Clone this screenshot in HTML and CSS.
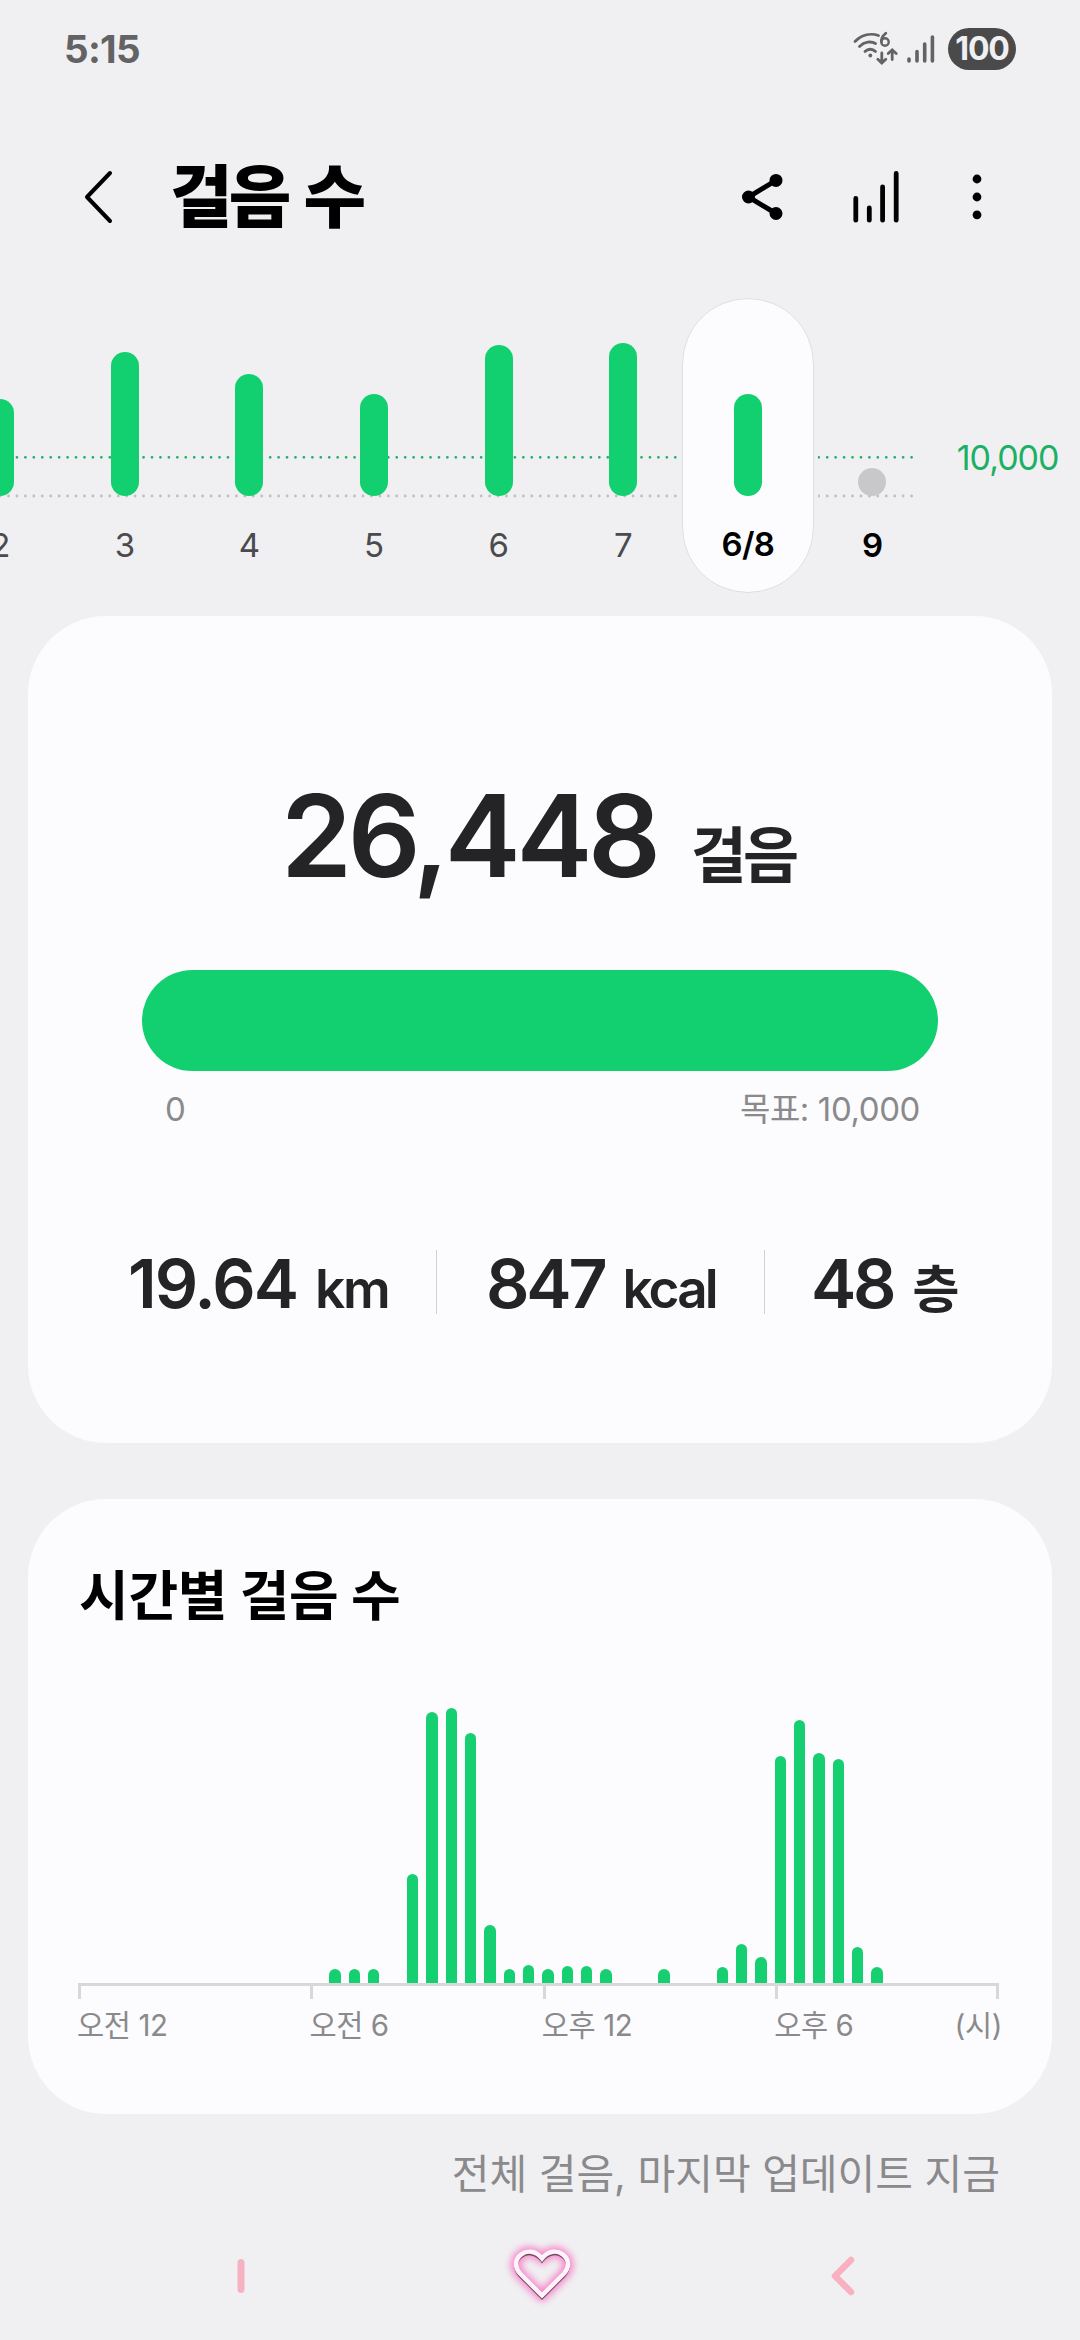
FILE: index.html
```html
<!DOCTYPE html>
<html lang="ko">
<head>
<meta charset="utf-8">
<title>걸음 수</title>
<link rel="stylesheet" href="styles.css">
</head>
<body>
<div class="status">
  <span class="clock">5:15</span>
  <div class="status-icons">
    <svg class="wifi" width="46" height="36" viewBox="0 0 46 36" fill="none" stroke="#636365" stroke-width="2.8" stroke-linecap="round">
      <path d="M2 10.500C9 3.500 18 2 25.500 4.500M6.500 15.500C11.500 10.500 18 10 22.500 12.500M12 20.500C15 17.500 19.500 17.500 22.500 20.500"/>
      <circle cx="17.300" cy="24.500" r="1.900" fill="#636365" stroke="none"/>
      <path d="M32.800 2.200C29.500 5 28.200 8 28.400 10.500"/><circle cx="32" cy="11" r="3.700" stroke-width="2.400"/>
      <path d="M28.800 22V31.500M24.800 28.200L28.800 32L32.800 28.200M39.200 28.500V19.500M35.200 22.500L39.200 18.800L43.200 22.500"/>
    </svg>
    <svg class="signal" width="28" height="30" viewBox="0 0 28 30" stroke="#636365" stroke-width="3.600" stroke-linecap="round">
      <path d="M2 25V27M10 17.500V27M17.700 10V27M25.400 3V27"/>
    </svg>
    <span class="battery">100</span>
  </div>
</div>
<header class="header">
  <svg class="back" width="30" height="54" viewBox="0 0 30 54" fill="none" stroke="#000" stroke-width="4" stroke-linecap="round" stroke-linejoin="round"><path d="M26 3L3 27L26 51"/></svg>
  <h1 class="title">걸음 수</h1>
  <div class="actions">
    <svg width="42" height="54" viewBox="0 0 42 54" stroke="#000" stroke-width="5"><path d="M35 10.400L7.500 27L35 43.500" fill="none"/><circle cx="7.500" cy="27" r="4"/><circle cx="35" cy="10.400" r="4"/><circle cx="35" cy="43.500" r="4"/></svg>
    <svg width="46" height="54" viewBox="0 0 46 54" stroke="#000" stroke-width="4.800" stroke-linecap="round"><path d="M2.800 28.500V50.200M16.300 38V50.200M29.600 17V50.200M43.200 3.500V50.200"/></svg>
    <svg class="more" width="10" height="54" viewBox="0 0 10 54"><circle cx="5" cy="9" r="4.400"/><circle cx="5" cy="27" r="4.400"/><circle cx="5" cy="44.800" r="4.400"/></svg>
  </div>
</header>
<section class="week">
  <svg class="guides" width="920" height="60" viewBox="0 0 920 60" fill="none" stroke-width="2.800" stroke-linecap="round" stroke-dasharray="0 8.440">
    <path d="M911.600 10.300H0" stroke="#20b168"/><path d="M911.600 49H0" stroke="#bfbfc1"/>
  </svg>
  <div class="days">
    <div class="day"><i class="bar" style="height:97px"></i><span>2</span></div>
    <div class="day"><i class="bar" style="height:144px"></i><span>3</span></div>
    <div class="day"><i class="bar" style="height:122px"></i><span>4</span></div>
    <div class="day"><i class="bar" style="height:102px"></i><span>5</span></div>
    <div class="day"><i class="bar" style="height:151px"></i><span>6</span></div>
    <div class="day"><i class="bar" style="height:153px"></i><span>7</span></div>
    <div class="day selected"><i class="bar" style="height:102px"></i><span>6/8</span></div>
    <div class="day next"><i class="bar" style="height:28px"></i><span>9</span></div>
  </div>
  <span class="goal-label">10,000</span>
</section>
<main>
  <section class="card summary">
    <div class="total"><span class="total-value">26,448</span><span class="total-unit">걸음</span></div>
    <div class="progress"></div>
    <div class="range"><span>0</span><span class="target">목표: 10,000</span></div>
    <div class="stats">
      <div class="stat distance"><b>19.64</b><span>km</span></div>
      <div class="stat energy"><b>847</b><span>kcal</span></div>
      <div class="stat floors"><b>48</b><span>층</span></div>
    </div>
  </section>
  <section class="card hourly">
    <h2>시간별 걸음 수</h2>
    <div class="chart">
      <i style="grid-column:14;height:14px"></i><i style="grid-column:15;height:14px"></i><i style="grid-column:16;height:14px"></i>
      <i style="grid-column:18;height:109px"></i><i style="grid-column:19;height:271px"></i><i style="grid-column:20;height:275px"></i><i style="grid-column:21;height:250px"></i><i style="grid-column:22;height:58px"></i><i style="grid-column:23;height:14px"></i><i style="grid-column:24;height:18px"></i>
      <i style="grid-column:25;height:14px"></i><i style="grid-column:26;height:17px"></i><i style="grid-column:27;height:17px"></i><i style="grid-column:28;height:14px"></i><i style="grid-column:31;height:14px"></i>
      <i style="grid-column:34;height:16px"></i><i style="grid-column:35;height:39px"></i><i style="grid-column:36;height:26px"></i><i style="grid-column:37;height:227px"></i><i style="grid-column:38;height:263px"></i><i style="grid-column:39;height:230px"></i><i style="grid-column:40;height:224px"></i><i style="grid-column:41;height:36px"></i><i style="grid-column:42;height:16px"></i>
    </div>
    <div class="axis"><span></span><span></span><span></span><span></span></div>
    <div class="hours"><span>오전 12</span><span>오전 6</span><span>오후 12</span><span>오후 6</span><span class="unit">(시)</span></div>
  </section>
</main>
<p class="updated">전체 걸음, 마지막 업데이트 지금</p>
<nav class="nav">
  <svg width="8" height="40" viewBox="0 0 8 40"><path d="M4 6.500V33.500" stroke="#f7b2c2" stroke-width="7" stroke-linecap="round"/></svg>
  <svg class="home" width="84" height="84" viewBox="0 0 84 84" fill="none" stroke-linejoin="round">
    <defs><filter id="glow" x="-30%" y="-30%" width="160%" height="160%"><feGaussianBlur stdDeviation="3.500"/></filter><filter id="shade"><feGaussianBlur stdDeviation="0.700"/></filter></defs>
    <path d="M42 62L20 40C7 26 29 8 42 25C55 8 77 26 64 40Z" stroke="#f58acb" stroke-width="11" filter="url(#glow)"/>
    <path d="M42 63.500L20 41.500C7 27.500 29 9.500 42 26.500C55 9.500 77 27.500 64 41.500Z" stroke="#704760" stroke-width="3.500" stroke-linejoin="miter" filter="url(#shade)"/>
    <path d="M42 61.500L20 39.500C7 25.500 29 7.500 42 24.500C55 7.500 77 25.500 64 39.500Z" stroke="#fff3fb" stroke-width="4.400" stroke-linejoin="miter"/>
  </svg>
  <svg width="26" height="44" viewBox="0 0 26 44" fill="none" stroke="#f9b0c0" stroke-width="6.500" stroke-linecap="round" stroke-linejoin="round"><path d="M21 6L5 22L21 38"/></svg>
</nav>
</body>
</html>
```
FILE: styles.css
```css
* { box-sizing: border-box; }
body {
  margin: 0; width: 1080px; height: 2340px; overflow: hidden;
  background: #f0f0f2; color: #000;
  font-family: Inter, "Noto Sans CJK KR", sans-serif;
  display: flex; flex-direction: column;
}
h1, h2, p { margin: 0; }
svg { display: block; flex: none; }
.status { height: 98px; padding: 0 64px; display: flex; justify-content: space-between; align-items: center; }
.clock { font-size: 38.5px; font-weight: 650; color: #636365; line-height: 98px; letter-spacing: -.7px; }
.status-icons { display: flex; align-items: center; }
.signal { margin: 0 13px 0 8px; }
.battery { width: 68px; height: 42px; border-radius: 21px; background: #4a4a4a; color: #f0f0f2; font-size: 32px; font-weight: 700; line-height: 41px; text-align: center; letter-spacing: -1.2px; }
.header { height: 198px; padding: 0 98px 0 84px; display: flex; align-items: center; }
.title { font-size: 68px; font-weight: 800; line-height: 198px; margin-left: 56px; letter-spacing: -3.8px; word-spacing: 5px; white-space: nowrap; }
.actions { display: flex; margin-left: auto; align-items: center; gap: 70px; }
.more { margin-left: 3px; }
.week { position: relative; height: 318px; display: flex; margin-top: 2px; }
.guides { position: absolute; left: 0; top: 149px; }
.days { position: relative; display: flex; margin-left: -62px; }
.day { width: 124.6px; height: 295px; display: flex; flex-direction: column; justify-content: flex-end; align-items: center; font-size: 33px; color: #4b4b4d; }
.day span { line-height: 40px; margin: 29px 0 28px; }
.bar { width: 28px; border-radius: 14px; background: #12d06f; }
.selected { width: 132px; margin: 0 -3.7px; border-radius: 66px; background: #fcfcfe; border: 1px solid #dededf; outline: 4px solid #f0f0f2; color: #000; font-weight: 600; letter-spacing: -.6px; }
.selected span { margin: 28px 0; }
.next { color: #000; font-weight: 600; }
.next .bar { background: #c8c8ca; }
.goal-label { position: relative; margin-left: 22px; line-height: 40px; margin-top: 140px; font-size: 34px; color: #1cb065; letter-spacing: -1px; }
main { padding: 0 28px; display: flex; flex-direction: column; gap: 56px; }
.card { background: #fcfcfe; border-radius: 78px; }
.summary { height: 827px; padding-top: 164px; color: #242426; }
.total { display: flex; padding-left: 253px; height: 112px; line-height: 112px; }
.total-value { font-size: 114px; font-weight: 600; letter-spacing: -4.3px; }
.total-unit { font-size: 61px; font-weight: 600; letter-spacing: -4px; margin-left: 34px; line-height: 152px; white-space: nowrap; }
.progress { margin: 78px 114px 0; height: 101px; border-radius: 51px; background: #12d06f; }
.range { display: flex; justify-content: space-between; padding: 0 132px 0 137px; margin-top: 18px; font-size: 33px; line-height: 40px; color: #8a8a8c; letter-spacing: -.4px; }
.stats { display: flex; margin-top: 121px; height: 64px; }
.stat { display: flex; align-items: baseline; line-height: 66px; white-space: nowrap; }
.stat b { font-size: 68px; font-weight: 600; letter-spacing: -2px; }
.stat span { font-size: 53px; font-weight: 600; letter-spacing: -2px; margin-left: 18px; }
.distance { width: 409px; padding-left: 100px; border-right: 1px solid #d2d2d4; }
.energy { width: 328px; padding-left: 49px; border-right: 1px solid #d2d2d4; }
.energy b, .floors b { letter-spacing: -3.2px; }
.energy span { letter-spacing: -2.8px; }
.floors { padding-left: 46px; }
.floors span { font-size: 51px; margin-left: 19px; }
.hourly { height: 615px; padding: 58px 50px 0; }
.hourly h2 { font-size: 54px; font-weight: 700; line-height: 80px; letter-spacing: -.3px; padding-left: 1px; white-space: nowrap; }
.chart { height: 346px; display: grid; grid-template-columns: repeat(48, 19.37px); align-items: end; padding-left: 0; }
.chart i { width: 11.4px; background: #16cf70; border-radius: 6px 6px 0 0; margin-left: -.3px; }
.axis { width: 921px; height: 16px; border-top: 3px solid #d8d8da; border-right: 3px solid #d8d8da; display: grid; grid-template-columns: repeat(4, 232.4px); }
.axis span { border-left: 3px solid #d8d8da; }
.hours { display: grid; grid-template-columns: repeat(3, 232.4px) 1fr auto; font-size: 29.5px; line-height: 40px; margin: 6px 0 0 -1px; color: #8a8a8c; letter-spacing: -.4px; white-space: nowrap; }
.updated { height: 120px; padding: 0 80px; text-align: right; font-size: 41px; line-height: 120px; color: #8a8a8c; letter-spacing: 0; white-space: nowrap; }
.nav { padding: 0 224px 0 237px; display: flex; align-items: center; justify-content: space-between; height: 84px; }
.home { margin-left: 8px; }
```
